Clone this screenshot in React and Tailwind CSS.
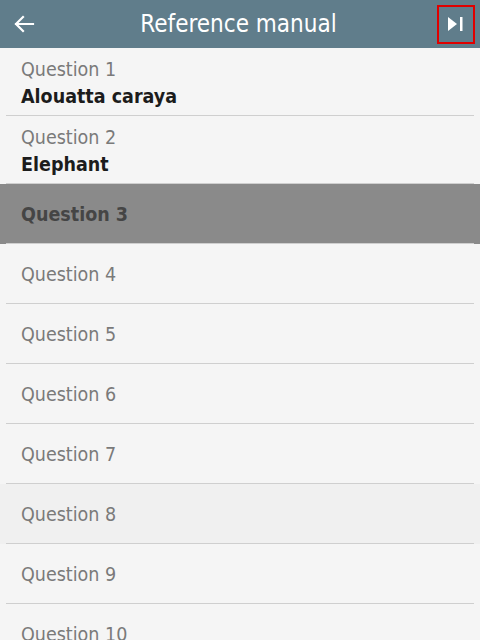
import React from 'react'

const font = { fontFamily: '"DejaVu Sans Condensed", "DejaVu Sans", Verdana, sans-serif' }

const answered = [
  { q: 'Question 1', a: 'Alouatta caraya' },
  { q: 'Question 2', a: 'Elephant' },
]

const rest = [4, 5, 6, 7, 8, 9, 10]

function Row({ children, className = '' }) {
  return (
    <div className={`relative ${className}`}>
      {children}
      <div className="absolute bottom-0 left-[6px] right-[6px] h-px bg-[#cfcfcf]"></div>
    </div>
  )
}

export default function App() {
  return (
    <div className="w-[480px] h-[640px] overflow-hidden bg-[#f5f5f5]" style={font}>
      <header className="h-12 bg-[#607d8b] flex items-center justify-between px-3 text-white">
        <button className="w-6 h-6 flex items-center justify-center">
          <svg width="24" height="24" viewBox="0 0 24 24" fill="none" stroke="white" strokeWidth="2.2" strokeLinecap="square">
            <path d="M21 12H4M11 5l-7 7 7 7" />
          </svg>
        </button>
        <h1 className="text-[24px] leading-none pl-1">Reference manual</h1>
        <button className="w-[38px] h-[39px] -mr-[7px] border-2 border-[#e00000] flex items-center justify-center">
          <svg width="16" height="14" viewBox="0 0 16 14" fill="white">
            <path d="M0 0L9 7L0 14Z" />
            <rect x="12" y="0" width="2.5" height="14" />
          </svg>
        </button>
      </header>

      {answered.map((r) => (
        <Row key={r.q} className="h-[68px] pl-[21px] pt-[11px]">
          <div className="text-[19.5px] leading-[22px] text-[#7a7a7a]">{r.q}</div>
          <div className="text-[19.5px] leading-[31px] font-bold text-[#1c1c1c]">{r.a}</div>
        </Row>
      ))}

      <Row className="h-[60px] bg-[#8a8a8a] flex items-center pl-[21px] pt-[2px]">
        <span className="text-[19.5px] font-bold text-[#454545]">Question 3</span>
      </Row>

      {rest.map((n) => (
        <Row key={n} className={`h-[60px] flex items-center pl-[21px] pt-[2px] ${n === 8 ? 'bg-[#f0f0f0]' : ''}`}>
          <span className="text-[19.5px] text-[#7a7a7a]">Question {n}</span>
        </Row>
      ))}
    </div>
  )
}
